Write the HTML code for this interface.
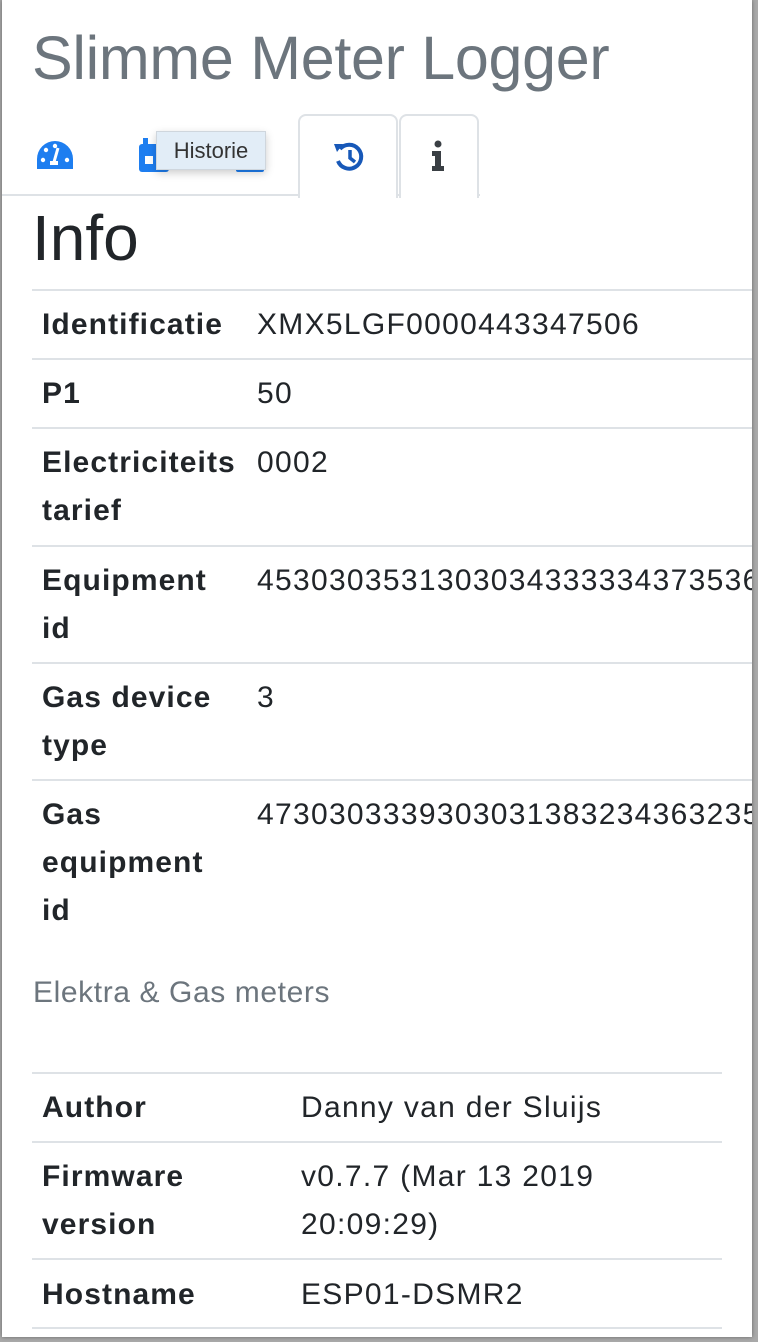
<!DOCTYPE html>
<html><head><meta charset="utf-8"><style>
html,body{margin:0;padding:0;width:758px;height:1342px;overflow:hidden;background:#a9a9a9;}
#page{position:absolute;left:2px;top:0;width:750px;height:1337px;background:#fff;overflow:hidden;box-shadow:0 0 4px rgba(0,0,0,.4);font-family:"Liberation Sans",sans-serif;color:#212529;}
.abs{position:absolute;white-space:nowrap;}
h1{position:absolute;left:30px;top:20px;margin:0;font-weight:400;font-size:61px;line-height:76px;color:#6c757d;letter-spacing:-0.3px;}
.hline{position:absolute;height:2px;background:#dee2e6;}
.tab{position:absolute;top:114px;height:82px;border:2px solid #dee2e6;border-bottom:none;border-radius:8px 8px 0 0;background:#fff;}
.k{position:absolute;font-weight:700;font-size:30px;line-height:48px;letter-spacing:1.1px;}
.v{position:absolute;font-size:30px;line-height:48px;white-space:nowrap;letter-spacing:1.3px;}
</style></head><body><div id="page">
<h1>Slimme Meter Logger</h1>
<div class="hline" style="left:0;top:194px;width:478px;"></div>
<div class="tab" style="left:296px;width:96px;"></div>
<div class="tab" style="left:397px;width:76px;"></div>
<svg class="abs" style="left:34px;top:140px" width="38" height="30" viewBox="0 0 38 30"><path d="M19 1A18 18 0 0 0 1 19v10h36V19A18 18 0 0 0 19 1z" fill="#1e7ef0"/><circle cx="7" cy="20" r="2.2" fill="#fff"/><circle cx="10" cy="10" r="2.2" fill="#fff"/><circle cx="19" cy="6" r="2.2" fill="#fff"/><circle cx="31" cy="20" r="2.2" fill="#fff"/><path d="M22 8l-4 14" stroke="#fff" stroke-width="3"/><rect x="14" y="21" width="8" height="4" fill="#fff"/></svg>
<svg class="abs" style="left:137px;top:138px" width="30" height="34" viewBox="0 0 30 34"><rect x="0" y="6" width="30" height="28" rx="3" fill="#1e7ef0"/><rect x="4" y="0" width="5" height="9" fill="#1e7ef0"/><rect x="6" y="18" width="8" height="8" fill="#fff"/></svg>
<div class="abs" style="left:234px;top:160px;width:28px;height:12px;background:#1e7ef0;border-radius:2px"></div>
<div class="abs" style="left:154px;top:131px;width:108px;height:37px;background:#e2edf7;border:1px solid #cfd6dd;box-shadow:0 3px 8px rgba(0,0,0,.2);font-size:22px;line-height:37px;text-align:center;color:#333;">Historie</div>
<svg class="abs" style="left:330px;top:139px" width="34" height="34" viewBox="0 0 34 34"><path d="M8 10A12 12 0 1 1 6 22" fill="none" stroke="#1758b8" stroke-width="4"/><path d="M2 5l9 0-6 8z" fill="#1758b8"/><path d="M18 11v8l5 4" fill="none" stroke="#1758b8" stroke-width="3.5"/></svg>
<svg class="abs" style="left:428px;top:140px" width="16" height="32" viewBox="0 0 16 32"><circle cx="8" cy="4" r="3.5" fill="#3a3f44"/><path d="M2 11h9v15h3v5H2v-5h3v-10H2z" fill="#3a3f44"/></svg>
<div class="abs" style="left:30px;top:200px;font-size:64px;line-height:76px;">Info</div>
<div class="hline" style="left:30px;top:289px;width:720px"></div>
<div class="hline" style="left:30px;top:358px;width:720px"></div>
<div class="hline" style="left:30px;top:427px;width:720px"></div>
<div class="hline" style="left:30px;top:545px;width:720px"></div>
<div class="hline" style="left:30px;top:662px;width:720px"></div>
<div class="hline" style="left:30px;top:779px;width:720px"></div>
<div class="k" style="left:40px;top:301px">Identificatie</div><div class="v" style="left:255px;top:301px">XMX5LGF0000443347506</div>
<div class="k" style="left:40px;top:370px">P1</div><div class="v" style="left:255px;top:370px">50</div>
<div class="k" style="left:40px;top:439px">Electriciteits<br>tarief</div><div class="v" style="left:255px;top:439px">0002</div>
<div class="k" style="left:40px;top:557px">Equipment<br>id</div><div class="v" style="left:255px;top:557px">4530303531303034333334373536</div>
<div class="k" style="left:40px;top:674px">Gas device<br>type</div><div class="v" style="left:255px;top:674px">3</div>
<div class="k" style="left:40px;top:791px">Gas<br>equipment<br>id</div><div class="v" style="left:255px;top:791px">4730303339303031383234363235</div>
<div class="abs" style="left:31px;top:976px;font-size:30px;letter-spacing:0.6px;color:#6c757d">Elektra &amp; Gas meters</div>
<div class="hline" style="left:30px;top:1072px;width:690px"></div>
<div class="hline" style="left:30px;top:1141px;width:690px"></div>
<div class="hline" style="left:30px;top:1258px;width:690px"></div>
<div class="hline" style="left:30px;top:1327px;width:690px"></div>
<div class="k" style="left:40px;top:1084px">Author</div><div class="v" style="left:299px;top:1084px">Danny van der Sluijs</div>
<div class="k" style="left:40px;top:1153px">Firmware<br>version</div><div class="v" style="left:299px;top:1153px">v0.7.7 (Mar 13 2019<br>20:09:29)</div>
<div class="k" style="left:40px;top:1271px">Hostname</div><div class="v" style="left:299px;top:1271px">ESP01-DSMR2</div>
</div></body></html>
